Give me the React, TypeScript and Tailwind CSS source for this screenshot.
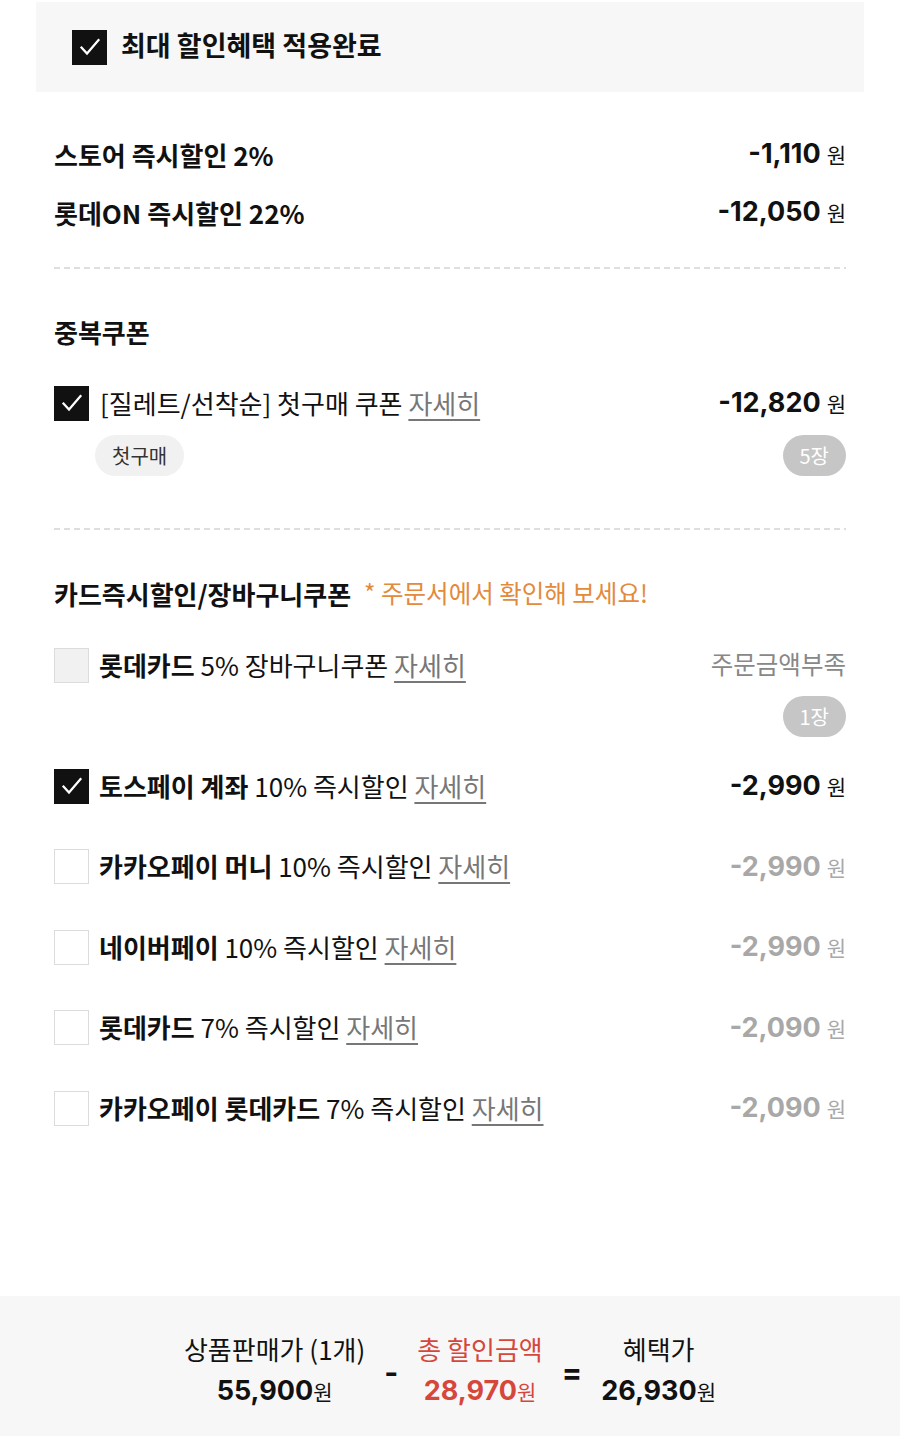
import React from "react";

const KR = "font-['Noto_Sans_CJK_KR',sans-serif]";
const NUM = "font-['Inter','Noto_Sans_CJK_KR',sans-serif]";

type BoxState = "on" | "off" | "disabled";

function Check({ state }: { state: BoxState }) {
  if (state === "on") {
    return (
      <div className="flex h-[35px] w-[35px] shrink-0 items-center justify-center bg-[#111]">
        <svg width="24" height="24" viewBox="0 0 24 24" fill="none">
          <path d="M3.5 12.5l5.5 6L20.5 5" stroke="#fff" strokeWidth="2.2" strokeLinecap="square" />
        </svg>
      </div>
    );
  }
  return (
    <div
      className={`h-[35px] w-[35px] shrink-0 border-[1.5px] border-[#dcdcdc] ${
        state === "disabled" ? "bg-[#f1f1f1]" : "bg-white"
      }`}
    />
  );
}

function Amount({ value, muted }: { value: string; muted?: boolean }) {
  return (
    <div className={`flex items-baseline gap-[6px] ${muted ? "text-[#a8a8a8]" : "text-[#111]"}`}>
      <span className={`${NUM} text-[27px] font-bold`}>{value}</span>
      <span className="text-[21px]">원</span>
    </div>
  );
}

function More() {
  return <span className="text-[#777] underline decoration-[1.5px] underline-offset-[5px]">자세히</span>;
}

function Dashed() {
  return (
    <div className="h-[2px] w-full bg-[linear-gradient(to_right,#dedede_60%,transparent_0)] bg-[length:10px_2px]" />
  );
}

function Pill({ children, dark }: { children: React.ReactNode; dark?: boolean }) {
  return (
    <span
      className={`inline-flex h-[41px] items-center rounded-full px-[17px] text-[20px] ${
        dark ? "bg-[#c6c6c6] text-white" : "bg-[#f1f1f1] text-[#333]"
      }`}
    >
      {children}
    </span>
  );
}

function Total({ label, value, red }: { label: string; value: string; red?: boolean }) {
  return (
    <div className={`flex flex-col items-center gap-[3px] ${red ? "text-[#d6473b]" : "text-[#111]"}`}>
      <span className="text-[26px]">{label}</span>
      <span className="flex items-baseline">
        <span className={`${NUM} text-[27px] font-bold`}>{value}</span>
        <span className="text-[21px]">원</span>
      </span>
    </div>
  );
}

const cards = [
  { bold: "토스페이 계좌", rest: "10% 즉시할인", amount: "-2,990", on: true },
  { bold: "카카오페이 머니", rest: "10% 즉시할인", amount: "-2,990", on: false },
  { bold: "네이버페이", rest: "10% 즉시할인", amount: "-2,990", on: false },
  { bold: "롯데카드", rest: "7% 즉시할인", amount: "-2,090", on: false },
  { bold: "카카오페이 롯데카드", rest: "7% 즉시할인", amount: "-2,090", on: false },
];

export default function App() {
  return (
    <div className={`${KR} flex min-h-[1436px] w-[900px] flex-col bg-white text-[#111]`}>
      <div className="px-[36px] pt-[2px]">
        <div className="flex h-[90px] items-center gap-[14px] bg-[#f7f7f7] pl-[36px]">
          <Check state="on" />
          <span className="-mt-[3px] text-[27px] font-bold">최대 할인혜택 적용완료</span>
        </div>
      </div>

      <div className="px-[54px]">
        {/* store / lotteON */}
        <div className="pt-[33px]">
          <div className="flex h-[58px] items-center justify-between">
            <span className="text-[26px] font-bold">스토어 즉시할인 2%</span>
            <Amount value="-1,110" />
          </div>
          <div className="flex h-[58px] items-center justify-between">
            <span className="text-[26px] font-bold">롯데ON 즉시할인 22%</span>
            <Amount value="-12,050" />
          </div>
        </div>
        <div className="mt-[26px]">
          <Dashed />
        </div>

        {/* coupons */}
        <div className="mt-[33px] flex h-[58px] items-center">
          <span className="text-[26px] font-bold">중복쿠폰</span>
        </div>
        <div className="mt-[14px] flex h-[58px] items-center justify-between">
          <div className="flex items-center gap-[11px]">
            <Check state="on" />
            <span className="-mt-[2px] text-[26px]">
              [질레트/선착순] 첫구매 쿠폰 <More />
            </span>
          </div>
          <Amount value="-12,820" />
        </div>
        <div className="mt-[3px] flex items-center justify-between pl-[41px]">
          <Pill>첫구매</Pill>
          <Pill dark>5장</Pill>
        </div>
        <div className="mt-[52px]">
          <Dashed />
        </div>

        {/* card */}
        <div className="mt-[34px] flex h-[58px] items-center gap-[13px]">
          <span className="text-[26px] font-bold">카드즉시할인/장바구니쿠폰</span>
          <span className="text-[24.5px] text-[#e38a3c]">* 주문서에서 확인해 보세요!</span>
        </div>
        <div className="mt-[14px] flex h-[58px] items-center justify-between">
          <div className="flex items-center gap-[10px]">
            <Check state="disabled" />
            <span className="-mt-[2px] text-[26px]">
              <b className="font-bold">롯데카드</b> 5% 장바구니쿠폰 <More />
            </span>
          </div>
          <span className="-mt-[2px] text-[24.5px] text-[#888]">주문금액부족</span>
        </div>
        <div className="mt-[2px] flex justify-end">
          <Pill dark>1장</Pill>
        </div>

        <div className="mt-[9px] flex flex-col">
          {cards.map((c) => (
            <div key={c.bold} className="flex h-[80.5px] items-center justify-between">
              <div className="flex items-center gap-[10px]">
                <Check state={c.on ? "on" : "off"} />
                <span className="-mt-[2px] text-[26px]">
                  <b className="font-bold">{c.bold}</b> {c.rest} <More />
                </span>
              </div>
              <Amount value={c.amount} muted={!c.on} />
            </div>
          ))}
        </div>
      </div>

      <div className="mt-auto flex h-[140px] items-center justify-center gap-[19px] bg-[#f7f7f7] pt-[8px]">
        <Total label="상품판매가 (1개)" value="55,900" />
        <span className={`${NUM} mt-[4px] text-[30px] font-bold`}>-</span>
        <Total label="총 할인금액" value="28,970" red />
        <span className={`${NUM} mt-[4px] text-[30px] font-bold`}>=</span>
        <Total label="혜택가" value="26,930" />
      </div>
    </div>
  );
}
